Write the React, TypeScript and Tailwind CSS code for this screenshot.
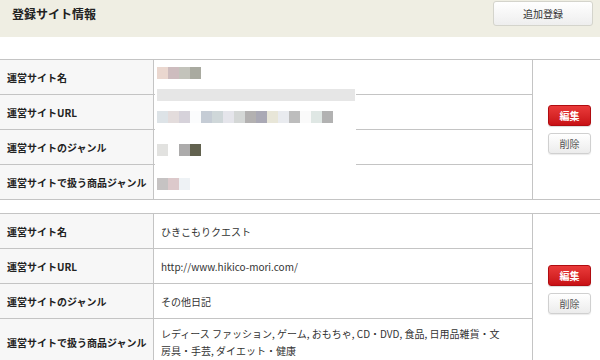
const font = { fontFamily: '"Noto Sans CJK JP", "Liberation Sans", sans-serif' };

type Row = { label: string; value?: React.ReactNode; h?: string };

const labels = ["運営サイト名", "運営サイトURL", "運営サイトのジャンル", "運営サイトで扱う商品ジャンル"];

const secondRows: Row[] = [
  { label: labels[0], value: "ひきこもりクエスト" },
  { label: labels[1], value: "http://www.hikico-mori.com/" },
  { label: labels[2], value: "その他日記" },
  {
    label: labels[3],
    value: (
      <span>
        レディース ファッション, ゲーム, おもちゃ, CD・DVD, 食品, 日用品雑貨・文
        <br />
        房具・手芸, ダイエット・健康
      </span>
    ),
    h: "h-[46px]",
  },
];

function Blocks({ colors }: { colors: string[] }) {
  return (
    <div className="flex h-[12px] blur-[0.4px]">
      {colors.map((c, i) => (
        <div key={i} className="w-[11px] h-full" style={{ backgroundColor: c }} />
      ))}
    </div>
  );
}

function Actions() {
  return (
    <div className="flex-1 border-l border-[#c4c4c4] flex flex-col items-center justify-center gap-[7px] pl-[6px]">
      <button className="w-[43px] h-[21px] rounded-[3px] bg-gradient-to-b from-[#ea3a3a] to-[#c80f14] border border-[#b00c10] text-white text-[10px] font-bold leading-none shadow-[0_1px_1px_rgba(0,0,0,0.15)]">
        編集
      </button>
      <button className="w-[43px] h-[21px] rounded-[3px] bg-gradient-to-b from-[#ffffff] to-[#ececec] border border-[#d0d0d0] text-[#555] text-[10px] leading-none shadow-[0_1px_1px_rgba(0,0,0,0.08)]">
        削除
      </button>
    </div>
  );
}

function Table({ rows, masked }: { rows: Row[]; masked?: boolean }) {
  return (
    <div className="flex border-t border-b border-[#c4c4c4]">
      <div className="relative w-[532px]">
        {rows.map((r, i) => (
          <div
            key={r.label}
            className={`flex ${r.h ?? "h-[35px]"} ${i < rows.length - 1 ? "border-b border-[#c4c4c4]" : ""}`}
          >
            <div className="w-[154px] shrink-0 bg-[#f7f7f7] border-r border-[#c4c4c4] flex items-center pl-[7px] text-[10px] font-bold text-[#222]">
              {r.label}
            </div>
            <div className="flex-1 flex items-center px-[7px] text-[10px] leading-[17px] text-[#333]">
              {r.value}
            </div>
          </div>
        ))}
        {masked && (
          <div className="absolute left-[155px] top-0 w-[201px] h-full bg-white pl-[2px]">
            <div className="pt-[7px]">
              <Blocks colors={["#ead7cf", "#cdbcbe", "#c3c3bb", "#a9aaa0"]} />
            </div>
            <div className="mt-[10px] h-[12px] w-[198px] bg-[#e6e6e6]" />
            <div className="mt-[10px]">
              <Blocks
                colors={["#dde3e7", "#e3dcdc", "#d6d2da", "#fbfcfd", "#c5ccd5", "#cfd7d9", "#e5e5eb", "#d4d7d6", "#b3b1b1", "#aaa9b5", "#e8e6d8", "#e9ebef", "#bdbdbd", "#fafafa", "#dfe7e4", "#b2b2b2"]}
              />
            </div>
            <div className="mt-[21px]">
              <Blocks colors={["#e2e2e0", "#ffffff", "#acabab", "#62624f"]} />
            </div>
            <div className="mt-[22px]">
              <Blocks colors={["#c6c3c3", "#dcc9cb", "#eef2f5"]} />
            </div>
          </div>
        )}
      </div>
      <Actions />
    </div>
  );
}

export default function App() {
  return (
    <div className="w-[600px] h-[360px] overflow-hidden bg-white" style={font}>
      <div className="h-[37px] bg-[#efeee3] flex items-start justify-between">
        <h2 className="pl-[12px] pt-[5px] text-[12px] font-bold text-[#222]">登録サイト情報</h2>
        <button className="mr-[7px] mt-[1px] w-[100px] h-[25px] rounded-[3px] border border-[#d4d4cc] bg-gradient-to-b from-[#ffffff] to-[#eeeeee] text-[10px] text-[#333]">
          追加登録
        </button>
      </div>
      <div className="pt-[22px] flex flex-col gap-[13px]">
        <Table
          rows={labels.map((l, i) => ({ label: l, h: i === 3 ? "h-[34px]" : "h-[35px]" }))}
          masked
        />
        <Table rows={secondRows} />
      </div>
    </div>
  );
}
